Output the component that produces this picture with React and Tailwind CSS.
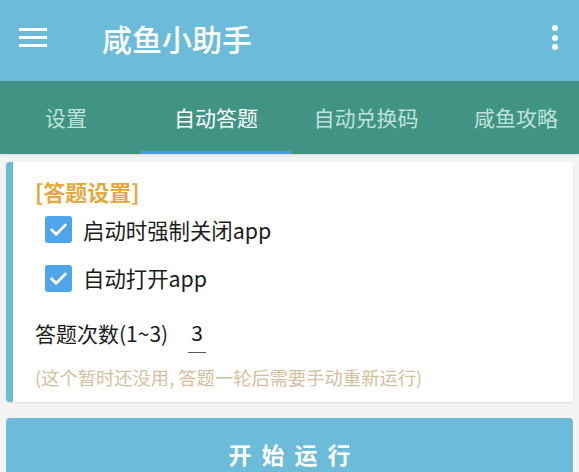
import React, { useState } from "react";

const font = { fontFamily: "'Noto Sans CJK SC', 'Noto Sans', sans-serif" };

const tabs = ["设置", "自动答题", "自动兑换码", "咸鱼攻略"];

const CheckRow = ({ label, checked, onToggle, className }) => (
  <div className={`flex items-center ${className}`}>
    {/* CHECKBOX */}
    <button
      type="button"
      onClick={onToggle}
      className={`ml-[10px] flex h-[27px] w-[27px] items-center justify-center rounded-[3px] ${
        checked ? "bg-[#4ea5ea]" : "border-2 border-[#777] bg-white"
      }`}
    >
      {checked && (
        <svg width="19" height="19" viewBox="0 0 24 24" fill="none">
          <path d="M3.5 12.5l5.5 5.5L20.5 6.5" stroke="#fff" strokeWidth="3.4" strokeLinecap="square" />
        </svg>
      )}
    </button>
    <span className="ml-[11px] text-[21.4px] leading-none text-[#1b1b1b]">{label}</span>
  </div>
);

export default function App() {
  const [activeTab, setActiveTab] = useState(1);
  const [forceClose, setForceClose] = useState(true);
  const [autoOpen, setAutoOpen] = useState(true);

  return (
    <div className="h-[472px] w-[579px] overflow-hidden bg-[#f4f4f4]" style={font}>
      {/* TOOLBAR */}
      <div className="flex h-[81px] items-center bg-[#6bbbd9] pb-[6px] pl-[19px] pr-[21px]">
        <div className="flex w-[28px] flex-col gap-[5px]">
          <div className="h-[3px] bg-white" />
          <div className="h-[3px] bg-white" />
          <div className="h-[3px] bg-white" />
        </div>
        <div className="ml-[55px] flex-1 text-[30px] font-medium leading-none text-white">咸鱼小助手</div>
        <div className="flex flex-col gap-[3.5px]">
          <div className="h-[6px] w-[6px] rounded-full bg-white" />
          <div className="h-[6px] w-[6px] rounded-full bg-white" />
          <div className="h-[6px] w-[6px] rounded-full bg-white" />
        </div>
      </div>

      {/* TABS */}
      <div className="relative z-10 h-[73px] overflow-hidden bg-[#419384] shadow-[0_1px_3px_rgba(0,0,0,0.12)]">
        <div className="ml-[-9px] flex h-full">
          {tabs.map((t, i) => (
            <button
              key={t}
              type="button"
              onClick={() => setActiveTab(i)}
              className={`relative flex h-full w-[150px] shrink-0 items-center justify-center text-[21px] leading-none ${
                activeTab === i ? "text-white" : "text-[#bfe2da]"
              }`}
            >
              {t}
              {activeTab === i && <div className="absolute bottom-0 left-0 h-[3px] w-full bg-[#4a9fe2]" />}
            </button>
          ))}
        </div>
      </div>

      {/* CONTENT */}
      <div className="px-[6px] pt-[8px]">
        {/* ANSWER SETTINGS CARD */}
        <div className="rounded-[4px] border-l-[7px] border-[#6bbbd9] bg-white pb-[12px] pl-[22px] shadow-[0_1px_2px_rgba(0,0,0,0.1)]">
          <div className="flex h-[43px] items-end pb-[3px] text-[22px] font-bold leading-none text-[#e3a83e]">[答题设置]</div>
          <CheckRow className="h-[49px]" label="启动时强制关闭app" checked={forceClose} onToggle={() => setForceClose(!forceClose)} />
          <CheckRow className="h-[48px]" label="自动打开app" checked={autoOpen} onToggle={() => setAutoOpen(!autoOpen)} />
          <div className="flex h-[62px] items-center">
            <span className="text-[21px] leading-none text-[#1b1b1b]">答题次数(1~3)</span>
            <span className="ml-[20px] flex h-[39px] w-[18px] items-center justify-center border-b border-[#555] text-[21px] leading-none text-[#1b1b1b]">
              3
            </span>
          </div>
          <div className="flex h-[26px] items-center text-[18.3px] leading-none text-[#d4c09d]">(这个暂时还没用, 答题一轮后需要手动重新运行)</div>
        </div>

        {/* START BUTTON */}
        <button
          type="button"
          className="mt-[16px] flex h-[72px] w-full items-center justify-center rounded-[4px] bg-[#6bbbd9] pl-[10px] text-[23px] font-bold leading-none tracking-[10px] text-white"
        >
          开始运行
        </button>
      </div>
    </div>
  );
}
